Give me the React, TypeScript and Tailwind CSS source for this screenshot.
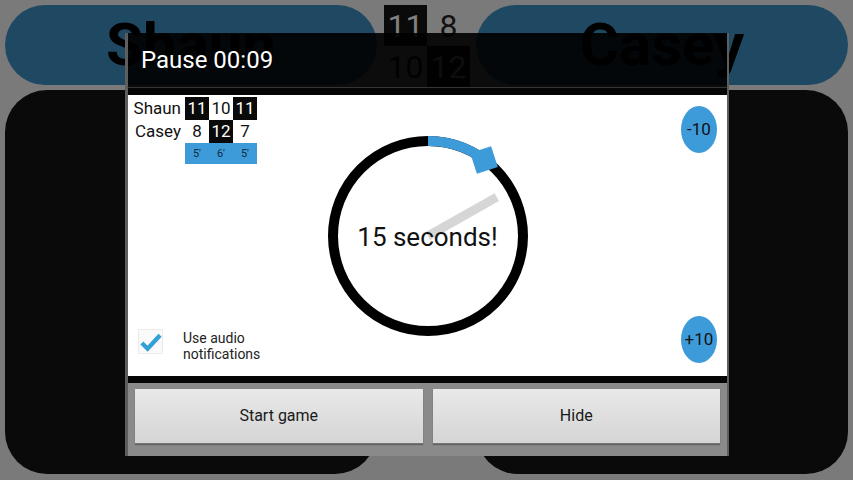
import React from 'react';

const font = { fontFamily: 'Roboto, "Noto Sans", sans-serif' };

/** Score table shown in the top-left of the pause dialog */
const ScoreTable: React.FC = () => {
  const rows = [
    { name: 'Shaun', scores: ['11', '10', '11'], won: [true, false, true] },
    { name: 'Casey', scores: ['8', '12', '7'], won: [false, true, false] },
  ];
  return (
    <div className="flex flex-col pt-[2px]">
      {rows.map((r) => (
        <div key={r.name} className="flex h-[23px] items-center">
          <div className="w-[57px] pr-[4px] text-right text-[17px] leading-none text-[#111]">{r.name}</div>
          {r.scores.map((s, i) => (
            <div
              key={i}
              className={
                r.won[i]
                  ? 'flex h-[23px] w-[24px] items-center justify-center bg-[#0a0a0a] text-[17px] leading-none text-white'
                  : 'flex h-[23px] w-[24px] items-center justify-center text-[17px] leading-none text-[#111]'
              }
            >
              {s}
            </div>
          ))}
        </div>
      ))}
      <div className="flex h-[21px]">
        <div className="w-[57px]" />
        {["5'", "6'", "5'"].map((m, i) => (
          <div key={i} className="flex h-[21px] w-[24px] items-center justify-center bg-[#3e9bd9] text-[11px] leading-none text-[#0e2a3d]">
            {m}
          </div>
        ))}
      </div>
    </div>
  );
};

/** Countdown dial */
const Dial: React.FC = () => (
  <div className="relative h-[200px] w-[200px]">
    <svg width="200" height="200" viewBox="0 0 200 200" className="absolute inset-0">
      <circle cx="100" cy="100" r="95" fill="none" stroke="#000" strokeWidth="10" />
      <path d="M 100 5 A 95 95 0 0 1 155.8 23.1" fill="none" stroke="#3e9bd9" strokeWidth="10" />
      <rect x="145" y="13" width="22" height="22" fill="#3e9bd9" transform="rotate(-18 156 24)" />
      <line x1="100" y1="100" x2="168.8" y2="61.1" stroke="#d6d6d6" strokeWidth="9" />
    </svg>
    <div className="absolute inset-0 flex items-center justify-center pt-[3px] text-[26px] leading-none text-[#111]">
      15 seconds!
    </div>
  </div>
);

const RoundBtn: React.FC<{ label: string }> = ({ label }) => (
  <div className="flex h-[47px] w-[36px] items-center justify-center rounded-[50%] bg-[#3e9bd9] text-[17px] leading-none text-[#111]">
    {label}
  </div>
);

const DialogButton: React.FC<{ label: string }> = ({ label }) => (
  <div className="flex flex-1 items-center justify-center border-b border-[#777] bg-gradient-to-b from-[#e9e9e9] to-[#d5d5d5] text-[16px] text-[#1a1a1a] shadow-[0_1px_1px_rgba(0,0,0,0.3)]">
    {label}
  </div>
);

export default function App() {
  return (
    <div className="relative h-[480px] w-[853px] overflow-hidden bg-[#7a7a7a]" style={font}>
      {/* background scoreboard, dimmed */}
      <div className="flex px-[5px] pt-[5px]">
        <div className="flex h-[80px] w-[372px] items-center justify-center rounded-full bg-[#1f4963] text-[60px] font-bold leading-none text-black">
          Shaun
        </div>
        <div className="ml-[7px] grid grid-cols-[43px_43px] grid-rows-[41px_42px] text-[32px] leading-none">
          <div className="flex items-center justify-center bg-[#0a0a0a] text-[#808080]">11</div>
          <div className="flex items-center justify-center text-[#111]">8</div>
          <div className="flex items-center justify-center text-[#111]">10</div>
          <div className="flex items-center justify-center bg-[#0a0a0a] text-[#808080]">12</div>
        </div>
        <div className="ml-[6px] flex h-[80px] w-[372px] items-center justify-center rounded-full bg-[#1f4963] text-[60px] font-bold leading-none text-black">
          Casey
        </div>
      </div>
      <div className="mt-[2px] flex justify-between px-[5px]">
        <div className="h-[384px] w-[372px] rounded-[42px] bg-[#0a0a0a]" />
        <div className="h-[384px] w-[372px] rounded-[42px] bg-[#0a0a0a]" />
      </div>

      {/* pause dialog */}
      <div className="absolute left-[125px] top-[33px] flex h-[423px] w-[604px] flex-col border-l-[3px] border-r-2 border-[#5e5e5e]">
        <div className="flex h-[54px] items-center bg-black/90 pl-[13px] text-[24px] leading-none text-white">
          Pause 00:09
        </div>
        <div className="h-px bg-[#353535]" />
        <div className="h-[7px] bg-[#050505]" />
        <div className="grid h-[281px] grid-cols-[1fr_200px_1fr] bg-white">
          <div className="flex flex-col justify-between pb-[14px]">
            <ScoreTable />
            <div className="flex items-start pl-[10px]">
              <div className="flex h-[25px] w-[25px] items-center justify-center border border-[#ececec] bg-[#fafafa]">
                <svg width="24" height="24" viewBox="0 0 24 24">
                  <path d="M3 13 L9 19 L22 5" fill="none" stroke="#33a0d8" strokeWidth="4.5" />
                </svg>
              </div>
              <div className="ml-[20px] pt-[1px] text-[14px] leading-[16px] text-[#222]">
                Use audio
                <br />
                notifications
              </div>
            </div>
          </div>
          <div className="flex items-center justify-center">
            <Dial />
          </div>
          <div className="flex flex-col items-end justify-between pb-[13px] pr-[10px] pt-[11px]">
            <RoundBtn label="-10" />
            <RoundBtn label="+10" />
          </div>
        </div>
        <div className="h-[7px] bg-[#050505]" />
        <div className="flex flex-1 gap-[10px] bg-[#8a8a8a] px-[7px] pb-[12px] pt-[6px]">
          <DialogButton label="Start game" />
          <DialogButton label="Hide" />
        </div>
      </div>
    </div>
  );
}
